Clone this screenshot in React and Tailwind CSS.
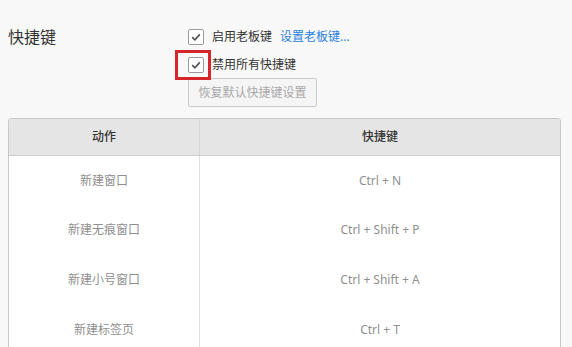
import React from 'react';

const rows = [
  { action: '新建窗口', keys: 'Ctrl + N' },
  { action: '新建无痕窗口', keys: 'Ctrl + Shift + P' },
  { action: '新建小号窗口', keys: 'Ctrl + Shift + A' },
  { action: '新建标签页', keys: 'Ctrl + T' },
];

const CheckBox = () => (
  <span className="flex h-4 w-4 items-center justify-center rounded-[2px] border border-[#9a9a9a] bg-white">
    <svg width="12" height="12" viewBox="0 0 12 12" fill="none">
      <path d="M2.2 6.2 L4.9 8.8 L9.8 3.4" stroke="#505050" strokeWidth="1.6" />
    </svg>
  </span>
);

const App = () => {
  return (
    <div
      className="h-[347px] w-[572px] overflow-hidden bg-[#f8f8f8] px-2 pt-[23px] text-[#333]"
      style={{ fontFamily: '"Noto Sans", "Noto Sans CJK SC", sans-serif' }}
    >
      <div className="flex">
        <div className="w-[180px] pt-[5px] text-[16px] leading-[18px]">快捷键</div>
        <div className="flex flex-col">
          <div className="flex h-[28px] items-center text-[12px]">
            <CheckBox />
            <span className="ml-2">启用老板键</span>
            <a className="ml-2 text-[#2a7fe0]">设置老板键...</a>
          </div>
          <div className="flex h-[27px] items-center text-[12px]">
            <span className="relative">
              <CheckBox />
              <span className="absolute -left-[13px] -top-[7px] h-[30px] w-[36px] border-[3px] border-[#d7262b]" />
            </span>
            <span className="ml-2">禁用所有快捷键</span>
          </div>
          <button className="h-[29px] w-[129px] rounded-[2px] border border-[#cbcbcb] bg-[#f5f5f5] text-[12px] text-[#a8a8a8]">
            恢复默认快捷键设置
          </button>
        </div>
      </div>

      <div className="mt-[11px] w-[553px] overflow-hidden rounded-t-[3px] border border-[#c8c8c8] bg-white text-[12px]">
        <div className="flex h-[37px] items-center border-b border-[#cdcdcd] bg-[#e5e5e5] font-medium text-[#333]">
          <div className="flex h-full w-[191px] items-center justify-center border-r border-[#d6d6d6]">动作</div>
          <div className="flex-1 text-center">快捷键</div>
        </div>
        {rows.map((row) => (
          <div key={row.action} className="flex h-[49.6px] items-center text-[#8f8f8f]">
            <div className="flex h-full w-[191px] items-center justify-center border-r border-[#e0e0e0]">
              {row.action}
            </div>
            <div className="flex-1 text-center">{row.keys}</div>
          </div>
        ))}
      </div>
    </div>
  );
};

export default App;
